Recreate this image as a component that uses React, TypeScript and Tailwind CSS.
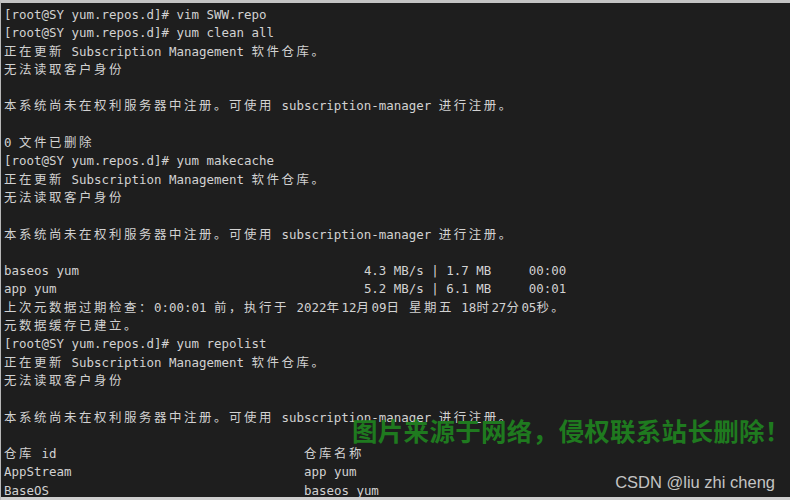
import React from "react";

const PROMPT = "[root@SY yum.repos.d]# ";
const UPDATING = "正在更新 Subscription Management 软件仓库。";
const NOID = "无法读取客户身份";
const NOTREG = "本系统尚未在权利服务器中注册。可使用 subscription-manager 进行注册。";

const pad = (s: string, n: number) => s + " ".repeat(Math.max(0, n - s.length));

const lines: string[] = [
  PROMPT + "vim SWW.repo",
  PROMPT + "yum clean all",
  UPDATING,
  NOID,
  "",
  NOTREG,
  "",
  "0 文件已删除",
  PROMPT + "yum makecache",
  UPDATING,
  NOID,
  "",
  NOTREG,
  "",
  pad("baseos yum", 48) + "4.3 MB/s | 1.7 MB     00:00",
  pad("app yum", 48) + "5.2 MB/s | 6.1 MB     00:01",
  "上次元数据过期检查：0:00:01 前，执行于 2022年12月09日 星期五 18时27分05秒。",
  "元数据缓存已建立。",
  PROMPT + "yum repolist",
  UPDATING,
  NOID,
  "",
  NOTREG,
  "",
  "仓库 id" + " ".repeat(33) + "仓库名称",
  pad("AppStream", 40) + "app yum",
  pad("BaseOS", 40) + "baseos yum",
];

const isWide = (c: string) => /[\u3000-\u303f\u4e00-\u9fff\uff00-\uffef]/.test(c);

function Line({ text }: { text: string }) {
  const runs: { wide: boolean; s: string }[] = [];
  for (const ch of Array.from(text)) {
    const w = isWide(ch);
    const last = runs[runs.length - 1];
    if (last && last.wide === w) last.s += ch;
    else runs.push({ wide: w, s: ch });
  }
  return (
    <div className="h-[18.3px] leading-[18.3px] whitespace-pre">
      {runs.map((r, i) =>
        r.wide ? (
          <span key={i} className="tracking-[2.54px]">
            {r.s}
          </span>
        ) : (
          <span key={i}>{r.s}</span>
        )
      )}
    </div>
  );
}

export default function App() {
  return (
    <div className="relative w-[790px] h-[500px] overflow-hidden bg-[#1e1e1e] border-t-[3px] border-t-[#c4c4c4] border-l border-l-[#b8b8b8] flex flex-col">
      <div className="flex-1 overflow-hidden pt-[3px] pl-[3px] text-[#d2d2d2] text-[12.46px] font-['DejaVu_Sans_Mono','Noto_Sans_CJK_SC',monospace]">
        {lines.map((l, i) => (
          <Line key={i} text={l} />
        ))}
      </div>
      <div className="h-[3px] bg-[#cfcfcf] shrink-0" />
      <div className="absolute left-[351px] top-[414px] leading-none text-[25.5px] tracking-[0.3px] font-bold text-[#1f7a1f] whitespace-nowrap font-['Noto_Sans_CJK_SC',sans-serif]">
        图片来源于网络，侵权联系站长删除！
      </div>
      <div className="absolute right-[15px] top-[471px] leading-none text-[16.5px] text-[#c4c4c4] whitespace-nowrap font-['Liberation_Sans',Arial,sans-serif]">
        CSDN @liu zhi cheng
      </div>
    </div>
  );
}
